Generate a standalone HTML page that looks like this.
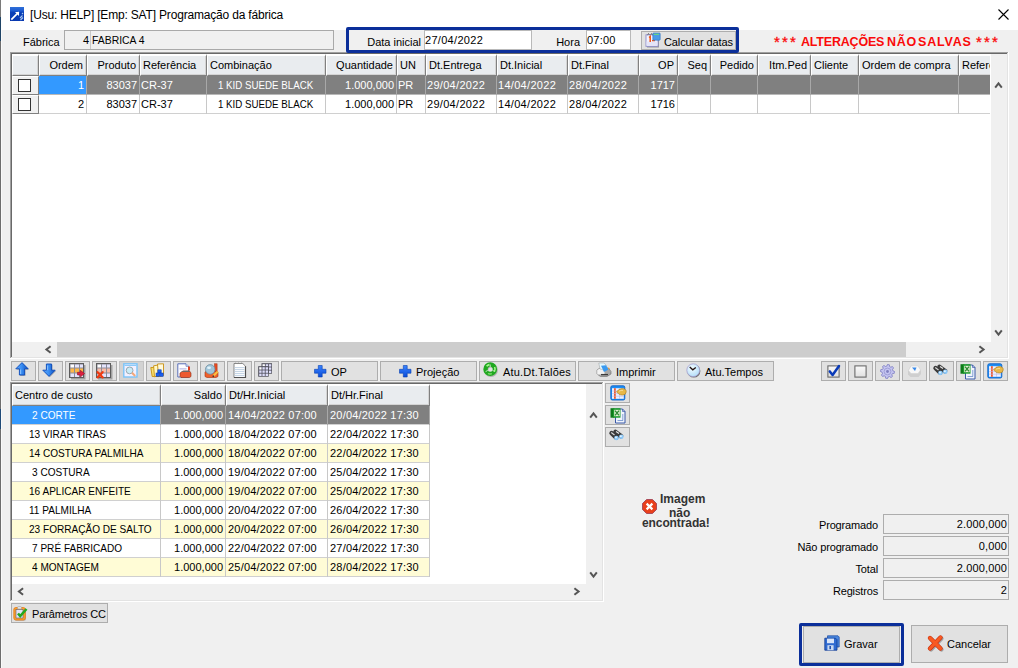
<!DOCTYPE html><html><head><meta charset="utf-8"><style>
*{box-sizing:border-box}
body{margin:0;width:1018px;height:668px;overflow:hidden;background:#f0f0f0;position:relative;font-family:"Liberation Sans",sans-serif;font-size:11px;color:#000}
.t{position:absolute;white-space:pre;line-height:13px}
.uc{letter-spacing:-0.6px}
.btn{position:absolute;background:#e1e1e1;border:1px solid #adadad}
svg{position:absolute;overflow:visible}
</style></head><body>
<div style="position:absolute;left:0px;top:0px;width:1px;height:17px;background:#7a7a7a"></div>
<div style="position:absolute;left:0px;top:17px;width:1px;height:24px;background:#1f4466"></div>
<div style="position:absolute;left:0px;top:41px;width:1px;height:368px;background:#6e6e6e"></div>
<div style="position:absolute;left:0px;top:409px;width:1px;height:20px;background:#1f4a78"></div>
<div style="position:absolute;left:0px;top:429px;width:1px;height:239px;background:#6e6e6e"></div>
<div style="position:absolute;left:1px;top:30px;width:1px;height:638px;background:#fafafa"></div>
<div style="position:absolute;left:1px;top:0px;width:1017px;height:30px;background:#fff"></div>
<svg style="left:10px;top:7px" width="14" height="14" viewBox="0 0 14 14"><defs><linearGradient id="tg" x1="0" y1="0" x2="0" y2="1"><stop offset="0" stop-color="#3070d8"/><stop offset="0.3" stop-color="#1a58d0"/><stop offset="0.35" stop-color="#0a40b8"/><stop offset="1" stop-color="#0838b0"/></linearGradient></defs><rect width="14" height="14" fill="url(#tg)"/><path d="M1.3 12.7 L8.8 5.2" stroke="#fff" stroke-width="1.7"/><path d="M5 5 H9 V9 Z" fill="#fff"/><path d="M10 11 L12.5 8.5 M10.5 13 L13 10.5 M12 7 L13 6" stroke="#a8c8f0" stroke-width="1.1"/></svg>
<div class="t" style="left:30px;top:8px;font-size:12px;letter-spacing:-0.18px;line-height:14px">[Usu: HELP] [Emp: SAT] Programação da fábrica</div>
<svg style="left:998px;top:9px" width="11" height="11" viewBox="0 0 11 11"><path d="M0.5 0.5 L10.5 10.5 M10.5 0.5 L0.5 10.5" stroke="#000" stroke-width="1.1"/></svg>
<div class="t" style="left:23px;top:36px;">Fábrica</div>
<div style="position:absolute;left:64px;top:30px;width:270px;height:20px;border:1px solid #a9a9a9;background:#f0f0f0"></div>
<div style="position:absolute;left:90px;top:31px;width:1px;height:18px;background:#c8c8c8"></div>
<div class="t" style="left:64px;top:34px;width:25px;text-align:right;">4</div>
<div class="t" style="left:92px;top:34px;transform:scaleX(0.945);transform-origin:0 0">FABRICA 4</div>
<div style="position:absolute;left:346px;top:27px;width:393px;height:26px;border:3px solid #0b2f9a;border-radius:2px;z-index:5"></div>
<div class="t" style="left:353px;top:36px;width:68px;text-align:right;">Data inicial</div>
<div style="position:absolute;left:424px;top:30px;width:108px;height:20px;background:#fff;border:1px solid #b9b9b9"></div>
<div class="t" style="left:425px;top:34px;letter-spacing:0.3px">27/04/2022</div>
<div class="t" style="left:540px;top:36px;width:40px;text-align:right;">Hora</div>
<div style="position:absolute;left:586px;top:30px;width:45px;height:20px;background:#fff;border:1px solid #b9b9b9"></div>
<div class="t" style="left:587px;top:34px;letter-spacing:0.2px">07:00</div>
<div style="position:absolute;left:641px;top:31px;width:95px;height:19px;background:#e1e1e1;border:1px solid #adadad"></div>
<div class="t" style="left:664px;top:36px;letter-spacing:-0.1px">Calcular datas</div>
<div class="t" style="left:774px;top:34px;font-size:12.5px;font-weight:bold;color:#fa0a0a;line-height:15px;font-size:15px;font-weight:normal;letter-spacing:2.2px;-webkit-text-stroke:0.3px #fa0a0a">***</div>
<div class="t" style="left:801px;top:35px;font-size:12.5px;font-weight:bold;color:#fa0a0a;line-height:15px;letter-spacing:-0.2px">ALTERAÇÕES</div>
<div class="t" style="left:887px;top:35px;font-size:12.5px;font-weight:bold;color:#fa0a0a;line-height:15px;letter-spacing:0.7px">NÃO</div>
<div class="t" style="left:918px;top:35px;font-size:12.5px;font-weight:bold;color:#fa0a0a;line-height:15px;letter-spacing:0.8px">SALVAS</div>
<div class="t" style="left:976px;top:34px;font-size:12.5px;font-weight:bold;color:#fa0a0a;line-height:15px;font-size:15px;font-weight:normal;letter-spacing:2.2px;-webkit-text-stroke:0.3px #fa0a0a">***</div>
<div style="position:absolute;left:10px;top:52px;width:999px;height:1px;background:#a0a0a0"></div>
<div style="position:absolute;left:10px;top:52px;width:1px;height:307px;background:#a0a0a0"></div>
<div style="position:absolute;left:11px;top:53px;width:997px;height:1px;background:#696969"></div>
<div style="position:absolute;left:11px;top:53px;width:1px;height:305px;background:#696969"></div>
<div style="position:absolute;left:10px;top:358px;width:999px;height:1px;background:#fff"></div>
<div style="position:absolute;left:1008px;top:52px;width:1px;height:307px;background:#fff"></div>
<div style="position:absolute;left:11px;top:357px;width:997px;height:1px;background:#e3e3e3"></div>
<div style="position:absolute;left:1007px;top:53px;width:1px;height:305px;background:#e3e3e3"></div>
<div style="position:absolute;left:12px;top:54px;width:979px;height:288px;background:#fff"></div>
<div style="position:absolute;left:991px;top:54px;width:16px;height:303px;background:#f0f0f0"></div>
<div style="position:absolute;left:12px;top:342px;width:979px;height:15px;background:#f0f0f0"></div>
<div style="position:absolute;left:57px;top:342px;width:849px;height:15px;background:#cdcdcd"></div>
<svg style="left:0;top:0" width="1" height="1"><path d="M995.2 87.6 L998.5 83.4 L1001.8 87.6" stroke="#555" stroke-width="2" fill="none"/></svg>
<svg style="left:0;top:0" width="1" height="1"><path d="M995.2 330.4 L998.5 334.6 L1001.8 330.4" stroke="#555" stroke-width="2" fill="none"/></svg>
<svg style="left:0;top:0" width="1" height="1"><path d="M50.6 346.2 L46.4 349.5 L50.6 352.8" stroke="#555" stroke-width="2" fill="none"/></svg>
<svg style="left:0;top:0" width="1" height="1"><path d="M979.4 346.2 L983.6 349.5 L979.4 352.8" stroke="#555" stroke-width="2" fill="none"/></svg>
<div style="position:absolute;left:12px;top:54px;width:978px;height:288px;overflow:hidden">
<div style="position:absolute;left:0px;top:0px;width:27px;height:22px;background:#e9ecef;border-top:2px solid #fff;border-left:1px solid #fff;border-right:1px solid #808080;border-bottom:1px solid #808080;box-shadow:inset -1px -1px 0 #d4d4d4"></div>
<div style="position:absolute;left:27px;top:0px;width:48px;height:22px;background:#e9ecef;border-top:2px solid #fff;border-left:1px solid #fff;border-right:1px solid #808080;border-bottom:1px solid #808080;box-shadow:inset -1px -1px 0 #d4d4d4"></div>
<div class="t" style="left:27px;top:5px;width:44px;text-align:right;">Ordem</div>
<div style="position:absolute;left:75px;top:0px;width:53px;height:22px;background:#e9ecef;border-top:2px solid #fff;border-left:1px solid #fff;border-right:1px solid #808080;border-bottom:1px solid #808080;box-shadow:inset -1px -1px 0 #d4d4d4"></div>
<div class="t" style="left:75px;top:5px;width:49px;text-align:right;">Produto</div>
<div style="position:absolute;left:128px;top:0px;width:67px;height:22px;background:#e9ecef;border-top:2px solid #fff;border-left:1px solid #fff;border-right:1px solid #808080;border-bottom:1px solid #808080;box-shadow:inset -1px -1px 0 #d4d4d4"></div>
<div class="t" style="left:131px;top:5px;">Referência</div>
<div style="position:absolute;left:195px;top:0px;width:119px;height:22px;background:#e9ecef;border-top:2px solid #fff;border-left:1px solid #fff;border-right:1px solid #808080;border-bottom:1px solid #808080;box-shadow:inset -1px -1px 0 #d4d4d4"></div>
<div class="t" style="left:198px;top:5px;">Combinação</div>
<div style="position:absolute;left:314px;top:0px;width:71px;height:22px;background:#e9ecef;border-top:2px solid #fff;border-left:1px solid #fff;border-right:1px solid #808080;border-bottom:1px solid #808080;box-shadow:inset -1px -1px 0 #d4d4d4"></div>
<div class="t" style="left:314px;top:5px;width:67px;text-align:right;">Quantidade</div>
<div style="position:absolute;left:385px;top:0px;width:29px;height:22px;background:#e9ecef;border-top:2px solid #fff;border-left:1px solid #fff;border-right:1px solid #808080;border-bottom:1px solid #808080;box-shadow:inset -1px -1px 0 #d4d4d4"></div>
<div class="t" style="left:388px;top:5px;">UN</div>
<div style="position:absolute;left:414px;top:0px;width:71px;height:22px;background:#e9ecef;border-top:2px solid #fff;border-left:1px solid #fff;border-right:1px solid #808080;border-bottom:1px solid #808080;box-shadow:inset -1px -1px 0 #d4d4d4"></div>
<div class="t" style="left:417px;top:5px;">Dt.Entrega</div>
<div style="position:absolute;left:485px;top:0px;width:71px;height:22px;background:#e9ecef;border-top:2px solid #fff;border-left:1px solid #fff;border-right:1px solid #808080;border-bottom:1px solid #808080;box-shadow:inset -1px -1px 0 #d4d4d4"></div>
<div class="t" style="left:488px;top:5px;">Dt.Inicial</div>
<div style="position:absolute;left:556px;top:0px;width:71px;height:22px;background:#e9ecef;border-top:2px solid #fff;border-left:1px solid #fff;border-right:1px solid #808080;border-bottom:1px solid #808080;box-shadow:inset -1px -1px 0 #d4d4d4"></div>
<div class="t" style="left:559px;top:5px;">Dt.Final</div>
<div style="position:absolute;left:627px;top:0px;width:39px;height:22px;background:#e9ecef;border-top:2px solid #fff;border-left:1px solid #fff;border-right:1px solid #808080;border-bottom:1px solid #808080;box-shadow:inset -1px -1px 0 #d4d4d4"></div>
<div class="t" style="left:627px;top:5px;width:35px;text-align:right;">OP</div>
<div style="position:absolute;left:666px;top:0px;width:33px;height:22px;background:#e9ecef;border-top:2px solid #fff;border-left:1px solid #fff;border-right:1px solid #808080;border-bottom:1px solid #808080;box-shadow:inset -1px -1px 0 #d4d4d4"></div>
<div class="t" style="left:666px;top:5px;width:29px;text-align:right;">Seq</div>
<div style="position:absolute;left:699px;top:0px;width:47px;height:22px;background:#e9ecef;border-top:2px solid #fff;border-left:1px solid #fff;border-right:1px solid #808080;border-bottom:1px solid #808080;box-shadow:inset -1px -1px 0 #d4d4d4"></div>
<div class="t" style="left:699px;top:5px;width:43px;text-align:right;">Pedido</div>
<div style="position:absolute;left:746px;top:0px;width:53px;height:22px;background:#e9ecef;border-top:2px solid #fff;border-left:1px solid #fff;border-right:1px solid #808080;border-bottom:1px solid #808080;box-shadow:inset -1px -1px 0 #d4d4d4"></div>
<div class="t" style="left:746px;top:5px;width:49px;text-align:right;">Itm.Ped</div>
<div style="position:absolute;left:799px;top:0px;width:48px;height:22px;background:#e9ecef;border-top:2px solid #fff;border-left:1px solid #fff;border-right:1px solid #808080;border-bottom:1px solid #808080;box-shadow:inset -1px -1px 0 #d4d4d4"></div>
<div class="t" style="left:802px;top:5px;">Cliente</div>
<div style="position:absolute;left:847px;top:0px;width:100px;height:22px;background:#e9ecef;border-top:2px solid #fff;border-left:1px solid #fff;border-right:1px solid #808080;border-bottom:1px solid #808080;box-shadow:inset -1px -1px 0 #d4d4d4"></div>
<div class="t" style="left:850px;top:5px;">Ordem de compra</div>
<div style="position:absolute;left:947px;top:0px;width:42px;height:22px;background:#e9ecef;border-top:2px solid #fff;border-left:1px solid #fff;border-right:1px solid #808080;border-bottom:1px solid #808080;box-shadow:inset -1px -1px 0 #d4d4d4"></div>
<div class="t" style="left:950px;top:5px;">Referência</div>
<div style="position:absolute;left:0px;top:22px;width:27px;height:19px;background:#f0f0f0;border-top:1px solid #fff;border-left:1px solid #fff;border-right:1px solid #808080;border-bottom:1px solid #808080"></div>
<div style="position:absolute;left:6px;top:25px;width:13px;height:13px;background:#fff;border:1.5px solid #333"></div>
<div style="position:absolute;left:75px;top:22px;width:913px;height:18px;background:#808080"></div>
<div style="position:absolute;left:27px;top:22px;width:47px;height:18px;background:#3399ff"></div>
<div style="position:absolute;left:27px;top:40px;width:961px;height:1px;background:#b8b8b8"></div>
<div style="position:absolute;left:74px;top:22px;width:1px;height:19px;background:#a8a8a8"></div>
<div class="t" style="left:27px;top:25px;width:45px;text-align:right;color:#fff;">1</div>
<div style="position:absolute;left:127px;top:22px;width:1px;height:19px;background:#a8a8a8"></div>
<div class="t" style="left:75px;top:25px;width:50px;text-align:right;color:#fff;">83037</div>
<div style="position:absolute;left:194px;top:22px;width:1px;height:19px;background:#a8a8a8"></div>
<div class="t" style="left:129px;top:25px;color:#fff;">CR-37</div>
<div style="position:absolute;left:313px;top:22px;width:1px;height:19px;background:#a8a8a8"></div>
<div class="t" style="left:206px;top:25px;color:#fff;transform:scaleX(0.885);transform-origin:0 0;">1 KID SUEDE BLACK</div>
<div style="position:absolute;left:384px;top:22px;width:1px;height:19px;background:#a8a8a8"></div>
<div class="t" style="left:314px;top:25px;width:68px;text-align:right;color:#fff;">1.000,000</div>
<div style="position:absolute;left:413px;top:22px;width:1px;height:19px;background:#a8a8a8"></div>
<div class="t" style="left:386px;top:25px;color:#fff;">PR</div>
<div style="position:absolute;left:484px;top:22px;width:1px;height:19px;background:#a8a8a8"></div>
<div class="t" style="left:415px;top:25px;color:#fff;letter-spacing:0.3px;">29/04/2022</div>
<div style="position:absolute;left:555px;top:22px;width:1px;height:19px;background:#a8a8a8"></div>
<div class="t" style="left:486px;top:25px;color:#fff;letter-spacing:0.3px;">14/04/2022</div>
<div style="position:absolute;left:626px;top:22px;width:1px;height:19px;background:#a8a8a8"></div>
<div class="t" style="left:557px;top:25px;color:#fff;letter-spacing:0.3px;">28/04/2022</div>
<div style="position:absolute;left:665px;top:22px;width:1px;height:19px;background:#a8a8a8"></div>
<div class="t" style="left:627px;top:25px;width:36px;text-align:right;color:#fff;">1717</div>
<div style="position:absolute;left:698px;top:22px;width:1px;height:19px;background:#a8a8a8"></div>
<div style="position:absolute;left:745px;top:22px;width:1px;height:19px;background:#a8a8a8"></div>
<div style="position:absolute;left:798px;top:22px;width:1px;height:19px;background:#a8a8a8"></div>
<div style="position:absolute;left:846px;top:22px;width:1px;height:19px;background:#a8a8a8"></div>
<div style="position:absolute;left:946px;top:22px;width:1px;height:19px;background:#a8a8a8"></div>
<div style="position:absolute;left:988px;top:22px;width:1px;height:19px;background:#a8a8a8"></div>
<div style="position:absolute;left:0px;top:41px;width:27px;height:19px;background:#f0f0f0;border-top:1px solid #fff;border-left:1px solid #fff;border-right:1px solid #808080;border-bottom:1px solid #808080"></div>
<div style="position:absolute;left:6px;top:44px;width:13px;height:13px;background:#fff;border:1.5px solid #333"></div>
<div style="position:absolute;left:27px;top:59px;width:961px;height:1px;background:#d0d0d0"></div>
<div style="position:absolute;left:74px;top:41px;width:1px;height:19px;background:#c8c8c8"></div>
<div class="t" style="left:27px;top:44px;width:45px;text-align:right;">2</div>
<div style="position:absolute;left:127px;top:41px;width:1px;height:19px;background:#c8c8c8"></div>
<div class="t" style="left:75px;top:44px;width:50px;text-align:right;">83037</div>
<div style="position:absolute;left:194px;top:41px;width:1px;height:19px;background:#c8c8c8"></div>
<div class="t" style="left:129px;top:44px;">CR-37</div>
<div style="position:absolute;left:313px;top:41px;width:1px;height:19px;background:#c8c8c8"></div>
<div class="t" style="left:206px;top:44px;transform:scaleX(0.885);transform-origin:0 0;">1 KID SUEDE BLACK</div>
<div style="position:absolute;left:384px;top:41px;width:1px;height:19px;background:#c8c8c8"></div>
<div class="t" style="left:314px;top:44px;width:68px;text-align:right;">1.000,000</div>
<div style="position:absolute;left:413px;top:41px;width:1px;height:19px;background:#c8c8c8"></div>
<div class="t" style="left:386px;top:44px;">PR</div>
<div style="position:absolute;left:484px;top:41px;width:1px;height:19px;background:#c8c8c8"></div>
<div class="t" style="left:415px;top:44px;letter-spacing:0.3px;">29/04/2022</div>
<div style="position:absolute;left:555px;top:41px;width:1px;height:19px;background:#c8c8c8"></div>
<div class="t" style="left:486px;top:44px;letter-spacing:0.3px;">14/04/2022</div>
<div style="position:absolute;left:626px;top:41px;width:1px;height:19px;background:#c8c8c8"></div>
<div class="t" style="left:557px;top:44px;letter-spacing:0.3px;">28/04/2022</div>
<div style="position:absolute;left:665px;top:41px;width:1px;height:19px;background:#c8c8c8"></div>
<div class="t" style="left:627px;top:44px;width:36px;text-align:right;">1716</div>
<div style="position:absolute;left:698px;top:41px;width:1px;height:19px;background:#c8c8c8"></div>
<div style="position:absolute;left:745px;top:41px;width:1px;height:19px;background:#c8c8c8"></div>
<div style="position:absolute;left:798px;top:41px;width:1px;height:19px;background:#c8c8c8"></div>
<div style="position:absolute;left:846px;top:41px;width:1px;height:19px;background:#c8c8c8"></div>
<div style="position:absolute;left:946px;top:41px;width:1px;height:19px;background:#c8c8c8"></div>
<div style="position:absolute;left:988px;top:41px;width:1px;height:19px;background:#c8c8c8"></div>
</div>
<div style="position:absolute;left:10px;top:382px;width:594px;height:1px;background:#a0a0a0"></div>
<div style="position:absolute;left:10px;top:382px;width:1px;height:220px;background:#a0a0a0"></div>
<div style="position:absolute;left:11px;top:383px;width:592px;height:1px;background:#696969"></div>
<div style="position:absolute;left:11px;top:383px;width:1px;height:218px;background:#696969"></div>
<div style="position:absolute;left:10px;top:601px;width:594px;height:1px;background:#fff"></div>
<div style="position:absolute;left:603px;top:382px;width:1px;height:220px;background:#fff"></div>
<div style="position:absolute;left:11px;top:600px;width:592px;height:1px;background:#e3e3e3"></div>
<div style="position:absolute;left:602px;top:383px;width:1px;height:218px;background:#e3e3e3"></div>
<div style="position:absolute;left:12px;top:384px;width:574px;height:200px;background:#fff"></div>
<div style="position:absolute;left:586px;top:384px;width:16px;height:216px;background:#f0f0f0"></div>
<div style="position:absolute;left:12px;top:584px;width:574px;height:16px;background:#f0f0f0"></div>
<svg style="left:0;top:0" width="1" height="1"><path d="M590.2 417.6 L593.5 413.4 L596.8 417.6" stroke="#555" stroke-width="2" fill="none"/></svg>
<svg style="left:0;top:0" width="1" height="1"><path d="M590.2 572.4 L593.5 576.6 L596.8 572.4" stroke="#555" stroke-width="2" fill="none"/></svg>
<svg style="left:0;top:0" width="1" height="1"><path d="M23.1 588.2 L18.9 591.5 L23.1 594.8" stroke="#555" stroke-width="2" fill="none"/></svg>
<svg style="left:0;top:0" width="1" height="1"><path d="M574.4 588.2 L578.6 591.5 L574.4 594.8" stroke="#555" stroke-width="2" fill="none"/></svg>
<div style="position:absolute;left:12px;top:384px;width:149px;height:22px;background:#e9ecef;border-top:2px solid #fff;border-left:1px solid #fff;border-right:1px solid #808080;border-bottom:1px solid #808080;box-shadow:inset -1px -1px 0 #d4d4d4"></div>
<div class="t" style="left:15px;top:389px;">Centro de custo</div>
<div style="position:absolute;left:161px;top:384px;width:65px;height:22px;background:#e9ecef;border-top:2px solid #fff;border-left:1px solid #fff;border-right:1px solid #808080;border-bottom:1px solid #808080;box-shadow:inset -1px -1px 0 #d4d4d4"></div>
<div class="t" style="left:161px;top:389px;width:61px;text-align:right;">Saldo</div>
<div style="position:absolute;left:226px;top:384px;width:102px;height:22px;background:#e9ecef;border-top:2px solid #fff;border-left:1px solid #fff;border-right:1px solid #808080;border-bottom:1px solid #808080;box-shadow:inset -1px -1px 0 #d4d4d4"></div>
<div class="t" style="left:229px;top:389px;">Dt/Hr.Inicial</div>
<div style="position:absolute;left:328px;top:384px;width:102px;height:22px;background:#e9ecef;border-top:2px solid #fff;border-left:1px solid #fff;border-right:1px solid #808080;border-bottom:1px solid #808080;box-shadow:inset -1px -1px 0 #d4d4d4"></div>
<div class="t" style="left:331px;top:389px;">Dt/Hr.Final</div>
<div style="position:absolute;left:12px;top:406px;width:148px;height:18px;background:#3399ff"></div>
<div style="position:absolute;left:161px;top:406px;width:269px;height:18px;background:#808080"></div>
<div style="position:absolute;left:12px;top:424px;width:418px;height:1px;background:#d0d0d0"></div>
<div style="position:absolute;left:160px;top:406px;width:1px;height:19px;background:#a8a8a8"></div>
<div style="position:absolute;left:225px;top:406px;width:1px;height:19px;background:#a8a8a8"></div>
<div style="position:absolute;left:327px;top:406px;width:1px;height:19px;background:#a8a8a8"></div>
<div style="position:absolute;left:429px;top:406px;width:1px;height:19px;background:#a8a8a8"></div>
<div class="t" style="left:32px;top:409px;color:#fff;transform:scaleX(0.915);transform-origin:0 0">2 CORTE</div>
<div class="t" style="left:161px;top:409px;width:62px;text-align:right;color:#fff;">1.000,000</div>
<div class="t" style="left:228px;top:409px;color:#fff;letter-spacing:0.2px">14/04/2022 07:00</div>
<div class="t" style="left:330px;top:409px;color:#fff;letter-spacing:0.2px">20/04/2022 17:30</div>
<div style="position:absolute;left:12px;top:425px;width:418px;height:18px;background:#fff"></div>
<div style="position:absolute;left:12px;top:443px;width:418px;height:1px;background:#d0d0d0"></div>
<div style="position:absolute;left:160px;top:425px;width:1px;height:19px;background:#c8c8c8"></div>
<div style="position:absolute;left:225px;top:425px;width:1px;height:19px;background:#c8c8c8"></div>
<div style="position:absolute;left:327px;top:425px;width:1px;height:19px;background:#c8c8c8"></div>
<div style="position:absolute;left:429px;top:425px;width:1px;height:19px;background:#c8c8c8"></div>
<div class="t" style="left:29px;top:428px;transform:scaleX(0.915);transform-origin:0 0">13 VIRAR TIRAS</div>
<div class="t" style="left:161px;top:428px;width:62px;text-align:right;">1.000,000</div>
<div class="t" style="left:228px;top:428px;letter-spacing:0.2px">18/04/2022 07:00</div>
<div class="t" style="left:330px;top:428px;letter-spacing:0.2px">22/04/2022 17:30</div>
<div style="position:absolute;left:12px;top:444px;width:418px;height:18px;background:#fffcd6"></div>
<div style="position:absolute;left:12px;top:462px;width:418px;height:1px;background:#d0d0d0"></div>
<div style="position:absolute;left:160px;top:444px;width:1px;height:19px;background:#c8c8c8"></div>
<div style="position:absolute;left:225px;top:444px;width:1px;height:19px;background:#c8c8c8"></div>
<div style="position:absolute;left:327px;top:444px;width:1px;height:19px;background:#c8c8c8"></div>
<div style="position:absolute;left:429px;top:444px;width:1px;height:19px;background:#c8c8c8"></div>
<div class="t" style="left:29px;top:447px;transform:scaleX(0.915);transform-origin:0 0">14 COSTURA PALMILHA</div>
<div class="t" style="left:161px;top:447px;width:62px;text-align:right;">1.000,000</div>
<div class="t" style="left:228px;top:447px;letter-spacing:0.2px">18/04/2022 07:00</div>
<div class="t" style="left:330px;top:447px;letter-spacing:0.2px">22/04/2022 17:30</div>
<div style="position:absolute;left:12px;top:463px;width:418px;height:18px;background:#fff"></div>
<div style="position:absolute;left:12px;top:481px;width:418px;height:1px;background:#d0d0d0"></div>
<div style="position:absolute;left:160px;top:463px;width:1px;height:19px;background:#c8c8c8"></div>
<div style="position:absolute;left:225px;top:463px;width:1px;height:19px;background:#c8c8c8"></div>
<div style="position:absolute;left:327px;top:463px;width:1px;height:19px;background:#c8c8c8"></div>
<div style="position:absolute;left:429px;top:463px;width:1px;height:19px;background:#c8c8c8"></div>
<div class="t" style="left:32px;top:466px;transform:scaleX(0.915);transform-origin:0 0">3 COSTURA</div>
<div class="t" style="left:161px;top:466px;width:62px;text-align:right;">1.000,000</div>
<div class="t" style="left:228px;top:466px;letter-spacing:0.2px">19/04/2022 07:00</div>
<div class="t" style="left:330px;top:466px;letter-spacing:0.2px">25/04/2022 17:30</div>
<div style="position:absolute;left:12px;top:482px;width:418px;height:18px;background:#fffcd6"></div>
<div style="position:absolute;left:12px;top:500px;width:418px;height:1px;background:#d0d0d0"></div>
<div style="position:absolute;left:160px;top:482px;width:1px;height:19px;background:#c8c8c8"></div>
<div style="position:absolute;left:225px;top:482px;width:1px;height:19px;background:#c8c8c8"></div>
<div style="position:absolute;left:327px;top:482px;width:1px;height:19px;background:#c8c8c8"></div>
<div style="position:absolute;left:429px;top:482px;width:1px;height:19px;background:#c8c8c8"></div>
<div class="t" style="left:29px;top:485px;transform:scaleX(0.915);transform-origin:0 0">16 APLICAR ENFEITE</div>
<div class="t" style="left:161px;top:485px;width:62px;text-align:right;">1.000,000</div>
<div class="t" style="left:228px;top:485px;letter-spacing:0.2px">19/04/2022 07:00</div>
<div class="t" style="left:330px;top:485px;letter-spacing:0.2px">25/04/2022 17:30</div>
<div style="position:absolute;left:12px;top:501px;width:418px;height:18px;background:#fff"></div>
<div style="position:absolute;left:12px;top:519px;width:418px;height:1px;background:#d0d0d0"></div>
<div style="position:absolute;left:160px;top:501px;width:1px;height:19px;background:#c8c8c8"></div>
<div style="position:absolute;left:225px;top:501px;width:1px;height:19px;background:#c8c8c8"></div>
<div style="position:absolute;left:327px;top:501px;width:1px;height:19px;background:#c8c8c8"></div>
<div style="position:absolute;left:429px;top:501px;width:1px;height:19px;background:#c8c8c8"></div>
<div class="t" style="left:29px;top:504px;transform:scaleX(0.915);transform-origin:0 0">11 PALMILHA</div>
<div class="t" style="left:161px;top:504px;width:62px;text-align:right;">1.000,000</div>
<div class="t" style="left:228px;top:504px;letter-spacing:0.2px">20/04/2022 07:00</div>
<div class="t" style="left:330px;top:504px;letter-spacing:0.2px">26/04/2022 17:30</div>
<div style="position:absolute;left:12px;top:520px;width:418px;height:18px;background:#fffcd6"></div>
<div style="position:absolute;left:12px;top:538px;width:418px;height:1px;background:#d0d0d0"></div>
<div style="position:absolute;left:160px;top:520px;width:1px;height:19px;background:#c8c8c8"></div>
<div style="position:absolute;left:225px;top:520px;width:1px;height:19px;background:#c8c8c8"></div>
<div style="position:absolute;left:327px;top:520px;width:1px;height:19px;background:#c8c8c8"></div>
<div style="position:absolute;left:429px;top:520px;width:1px;height:19px;background:#c8c8c8"></div>
<div class="t" style="left:29px;top:523px;transform:scaleX(0.915);transform-origin:0 0">23 FORRAÇÃO DE SALTO</div>
<div class="t" style="left:161px;top:523px;width:62px;text-align:right;">1.000,000</div>
<div class="t" style="left:228px;top:523px;letter-spacing:0.2px">20/04/2022 07:00</div>
<div class="t" style="left:330px;top:523px;letter-spacing:0.2px">26/04/2022 17:30</div>
<div style="position:absolute;left:12px;top:539px;width:418px;height:18px;background:#fff"></div>
<div style="position:absolute;left:12px;top:557px;width:418px;height:1px;background:#d0d0d0"></div>
<div style="position:absolute;left:160px;top:539px;width:1px;height:19px;background:#c8c8c8"></div>
<div style="position:absolute;left:225px;top:539px;width:1px;height:19px;background:#c8c8c8"></div>
<div style="position:absolute;left:327px;top:539px;width:1px;height:19px;background:#c8c8c8"></div>
<div style="position:absolute;left:429px;top:539px;width:1px;height:19px;background:#c8c8c8"></div>
<div class="t" style="left:32px;top:542px;transform:scaleX(0.915);transform-origin:0 0">7 PRÉ FABRICADO</div>
<div class="t" style="left:161px;top:542px;width:62px;text-align:right;">1.000,000</div>
<div class="t" style="left:228px;top:542px;letter-spacing:0.2px">22/04/2022 07:00</div>
<div class="t" style="left:330px;top:542px;letter-spacing:0.2px">27/04/2022 17:30</div>
<div style="position:absolute;left:12px;top:558px;width:418px;height:18px;background:#fffcd6"></div>
<div style="position:absolute;left:12px;top:576px;width:418px;height:1px;background:#d0d0d0"></div>
<div style="position:absolute;left:160px;top:558px;width:1px;height:19px;background:#c8c8c8"></div>
<div style="position:absolute;left:225px;top:558px;width:1px;height:19px;background:#c8c8c8"></div>
<div style="position:absolute;left:327px;top:558px;width:1px;height:19px;background:#c8c8c8"></div>
<div style="position:absolute;left:429px;top:558px;width:1px;height:19px;background:#c8c8c8"></div>
<div class="t" style="left:32px;top:561px;transform:scaleX(0.915);transform-origin:0 0">4 MONTAGEM</div>
<div class="t" style="left:161px;top:561px;width:62px;text-align:right;">1.000,000</div>
<div class="t" style="left:228px;top:561px;letter-spacing:0.2px">25/04/2022 07:00</div>
<div class="t" style="left:330px;top:561px;letter-spacing:0.2px">28/04/2022 17:30</div>
<div style="position:absolute;left:11px;top:361px;width:25px;height:20px;border:1px solid #adadad;background:#e1e1e1"></div>
<div style="position:absolute;left:38px;top:361px;width:25px;height:20px;border:1px solid #adadad;background:#e1e1e1"></div>
<div style="position:absolute;left:65px;top:361px;width:25px;height:20px;border:1px solid #adadad;background:#e1e1e1"></div>
<div style="position:absolute;left:92px;top:361px;width:25px;height:20px;border:1px solid #adadad;background:#e1e1e1"></div>
<div style="position:absolute;left:119px;top:361px;width:25px;height:20px;border:1px solid #adadad;background:#d3d3d3;border-color:#c2c2c2"></div>
<div style="position:absolute;left:146px;top:361px;width:25px;height:20px;border:1px solid #adadad;background:#e1e1e1"></div>
<div style="position:absolute;left:173px;top:361px;width:25px;height:20px;border:1px solid #adadad;background:#e1e1e1"></div>
<div style="position:absolute;left:200px;top:361px;width:25px;height:20px;border:1px solid #adadad;background:#e1e1e1"></div>
<div style="position:absolute;left:227px;top:361px;width:25px;height:20px;border:1px solid #adadad;background:#e1e1e1"></div>
<div style="position:absolute;left:254px;top:361px;width:25px;height:20px;border:1px solid #adadad;background:#e1e1e1"></div>
<div style="position:absolute;left:281px;top:361px;width:97px;height:20px;background:#e1e1e1;border:1px solid #adadad"></div>
<div style="position:absolute;left:380px;top:361px;width:97px;height:20px;background:#e1e1e1;border:1px solid #adadad"></div>
<div style="position:absolute;left:479px;top:361px;width:97px;height:20px;background:#e1e1e1;border:1px solid #adadad"></div>
<div style="position:absolute;left:578px;top:361px;width:97px;height:20px;background:#e1e1e1;border:1px solid #adadad"></div>
<div style="position:absolute;left:677px;top:361px;width:97px;height:20px;background:#e1e1e1;border:1px solid #adadad"></div>
<div style="position:absolute;left:821px;top:361px;width:25px;height:20px;background:#e1e1e1;border:1px solid #adadad"></div>
<div style="position:absolute;left:848px;top:361px;width:25px;height:20px;background:#e1e1e1;border:1px solid #adadad"></div>
<div style="position:absolute;left:875px;top:361px;width:25px;height:20px;background:#e1e1e1;border:1px solid #adadad"></div>
<div style="position:absolute;left:902px;top:361px;width:25px;height:20px;background:#e1e1e1;border:1px solid #adadad"></div>
<div style="position:absolute;left:929px;top:361px;width:25px;height:20px;background:#e1e1e1;border:1px solid #adadad"></div>
<div style="position:absolute;left:956px;top:361px;width:25px;height:20px;background:#e1e1e1;border:1px solid #adadad"></div>
<div style="position:absolute;left:983px;top:361px;width:25px;height:20px;background:#e1e1e1;border:1px solid #adadad"></div>
<div style="position:absolute;left:605px;top:383px;width:25px;height:20px;background:#e1e1e1;border:1px solid #adadad"></div>
<div style="position:absolute;left:605px;top:405px;width:25px;height:20px;background:#e1e1e1;border:1px solid #adadad"></div>
<div style="position:absolute;left:605px;top:427px;width:25px;height:20px;background:#e1e1e1;border:1px solid #adadad"></div>
<svg style="left:642px;top:499px" width="15" height="15" viewBox="0 0 15 15"><path d="M4.5 0.5 H10.5 L14.5 4.5 V10.5 L10.5 14.5 H4.5 L0.5 10.5 V4.5 Z" fill="#e8401c" stroke="#9a3a50" stroke-width="0.8"/><path d="M4.6 4.6 L10.4 10.4 M10.4 4.6 L4.6 10.4" stroke="#fff" stroke-width="2.2"/></svg>
<div class="t" style="left:660px;top:493px;font-size:12px;font-weight:bold;color:#333">Imagem</div>
<div class="t" style="left:669px;top:507px;font-size:12px;font-weight:bold;color:#333">não</div>
<div class="t" style="left:642px;top:517px;font-size:12px;font-weight:bold;color:#333;letter-spacing:-0.1px">encontrada!</div>
<div style="position:absolute;left:883px;top:514px;width:126px;height:20px;border:1px solid #adadad"></div>
<div class="t" style="left:700px;top:519px;width:178px;text-align:right;letter-spacing:-0.15px">Programado</div>
<div class="t" style="left:886px;top:518px;width:121px;text-align:right;letter-spacing:0.15px">2.000,000</div>
<div style="position:absolute;left:883px;top:536px;width:126px;height:20px;border:1px solid #adadad"></div>
<div class="t" style="left:700px;top:541px;width:178px;text-align:right;letter-spacing:-0.15px">Não programado</div>
<div class="t" style="left:886px;top:540px;width:121px;text-align:right;letter-spacing:0.15px">0,000</div>
<div style="position:absolute;left:883px;top:558px;width:126px;height:20px;border:1px solid #adadad"></div>
<div class="t" style="left:700px;top:563px;width:178px;text-align:right;letter-spacing:-0.15px">Total</div>
<div class="t" style="left:886px;top:562px;width:121px;text-align:right;letter-spacing:0.15px">2.000,000</div>
<div style="position:absolute;left:883px;top:580px;width:126px;height:20px;border:1px solid #adadad"></div>
<div class="t" style="left:700px;top:585px;width:178px;text-align:right;letter-spacing:-0.15px">Registros</div>
<div class="t" style="left:886px;top:584px;width:121px;text-align:right;letter-spacing:0.15px">2</div>
<div style="position:absolute;left:11px;top:603px;width:97px;height:20px;background:#e1e1e1;border:1px solid #adadad"></div>
<div class="t" style="left:32px;top:608px;letter-spacing:-0.15px">Parâmetros CC</div>
<div style="position:absolute;left:799px;top:623px;width:105px;height:43px;border:3px solid #0b2f9a;border-radius:2px"></div>
<div style="position:absolute;left:803px;top:626px;width:97px;height:37px;background:#e1e1e1;border:1px solid #adadad"></div>
<div class="t" style="left:844px;top:638px;">Gravar</div>
<div style="position:absolute;left:911px;top:625px;width:97px;height:38px;background:#e1e1e1;border:1px solid #adadad"></div>
<div class="t" style="left:947px;top:638px;">Cancelar</div>
<svg style="left:15px;top:362px" width="15" height="15" viewBox="0 0 15 15"><defs><linearGradient id="g1" x1="0" y1="0" x2="1" y2="0"><stop offset="0" stop-color="#5aa8ff"/><stop offset="0.45" stop-color="#3c90f4"/><stop offset="1" stop-color="#0c50c0"/></linearGradient></defs><path d="M7 0.6 L13.2 6.8 H9.6 V13 H4.4 V6.8 H0.8 Z" transform="translate(0.9 0.9)" fill="#000" opacity="0.22"/><path d="M7 0.6 L13.2 6.8 H9.6 V13 H4.4 V6.8 H0.8 Z" fill="url(#g1)" stroke="#0a48b8" stroke-width="0.9" stroke-linejoin="round"/><path d="M5.6 7.5 V12" stroke="#a8d4ff" stroke-width="1" opacity="0.7"/></svg>
<svg style="left:42px;top:363px" width="15" height="15" viewBox="0 0 15 15"><defs><linearGradient id="g2" x1="0" y1="0" x2="1" y2="0"><stop offset="0" stop-color="#5aa8ff"/><stop offset="0.45" stop-color="#3c90f4"/><stop offset="1" stop-color="#0c50c0"/></linearGradient></defs><path d="M4.4 1 H9.6 V7.2 H13.2 L7 13.4 L0.8 7.2 H4.4 Z" transform="translate(0.9 0.9)" fill="#000" opacity="0.22"/><path d="M4.4 1 H9.6 V7.2 H13.2 L7 13.4 L0.8 7.2 H4.4 Z" fill="url(#g2)" stroke="#0a48b8" stroke-width="0.9" stroke-linejoin="round"/><path d="M5.6 2.5 V7" stroke="#a8d4ff" stroke-width="1" opacity="0.7"/></svg>
<svg style="left:69px;top:363px" width="17" height="17" viewBox="0 0 17 17"><rect x="2" y="2" width="14.5" height="14.5" fill="#555" opacity="0.45"/><rect x="0.5" y="0.5" width="14" height="14" fill="#8c8c98" stroke="#5c5c5c" stroke-width="1"/><rect x="1.5" y="1.5" width="3.5" height="3" fill="#ffffff"/><rect x="6" y="1.5" width="4" height="3" fill="#e4e4fc"/><rect x="11" y="1.5" width="3" height="3" fill="#e4e4fc"/><rect x="1.5" y="5.5" width="3.5" height="4" fill="#ffb848"/><rect x="6" y="5.5" width="4" height="4" fill="#ffb848"/><rect x="11" y="5.5" width="3" height="4" fill="#ffb848"/><rect x="1.5" y="10.5" width="3.5" height="3.5" fill="#e4e4fc"/><rect x="6" y="10.5" width="4" height="3.5" fill="#e4e4fc"/><rect x="11" y="10.5" width="3" height="3.5" fill="#e4e4fc"/><path d="M8.5 9.3 H11.3 V7.3 L15.6 10.6 L11.3 14 V12 H8.5 Z" fill="#e02040" stroke="#901028" stroke-width="0.6" stroke-linejoin="round"/></svg>
<svg style="left:96px;top:363px" width="17" height="17" viewBox="0 0 17 17"><rect x="2" y="2" width="14.5" height="14.5" fill="#555" opacity="0.45"/><rect x="0.5" y="0.5" width="14" height="14" fill="#8c8c98" stroke="#5c5c5c" stroke-width="1"/><rect x="1.5" y="1.5" width="3.5" height="3" fill="#ffffff"/><rect x="6" y="1.5" width="4" height="3" fill="#e4e4fc"/><rect x="11" y="1.5" width="3" height="3" fill="#e4e4fc"/><rect x="1.5" y="5.5" width="3.5" height="4" fill="#f6bca8"/><rect x="6" y="5.5" width="4" height="4" fill="#f6bca8"/><rect x="11" y="5.5" width="3" height="4" fill="#f6bca8"/><rect x="1.5" y="10.5" width="3.5" height="3.5" fill="#e4e4fc"/><rect x="6" y="10.5" width="4" height="3.5" fill="#e4e4fc"/><rect x="11" y="10.5" width="3" height="3.5" fill="#e4e4fc"/><path d="M1.6 9.2 L6.6 14.4 M6.6 9.2 L1.6 14.4" stroke="#f03a10" stroke-width="2.3" stroke-linecap="round"/></svg>
<svg style="left:123px;top:363px" width="15" height="15" viewBox="0 0 15 15"><rect x="0.8" y="0.8" width="13.2" height="13.2" fill="#f2f0ff" stroke="#7cc4f8" stroke-width="1.4"/><rect x="1.5" y="2" width="12" height="1" fill="#8ccaf8"/><circle cx="6.6" cy="7.4" r="3.4" fill="#c8ecf8" stroke="#9aa8b0" stroke-width="1"/><path d="M9 9.8 L12.2 13" stroke="#f4a878" stroke-width="2"/></svg>
<svg style="left:150px;top:363px" width="15" height="15" viewBox="0 0 15 15"><path d="M0.8 4.5 H5 L6 6 H9 V13.5 H2.2 Z" fill="#f8e070" stroke="#c89010" stroke-width="0.9"/><path d="M3.6 2.8 L9.5 1.8 V12.5 L4.5 13.8 Z" fill="#fff8c8" stroke="#c89010" stroke-width="0.9"/><path d="M7.5 1 L13.5 0.8 V12.5 L8.5 13.6 Z" fill="#fffadc" stroke="#c89010" stroke-width="0.9"/><rect x="7.8" y="6.8" width="3.4" height="3.2" fill="#1a5ef0" stroke="#0838a8" stroke-width="0.5"/><rect x="6" y="10" width="3.4" height="3.4" fill="#1a5ef0" stroke="#0838a8" stroke-width="0.5"/><rect x="9.8" y="10" width="3.4" height="3.4" fill="#1a5ef0" stroke="#0838a8" stroke-width="0.5"/></svg>
<svg style="left:177px;top:363px" width="15" height="15" viewBox="0 0 15 15"><path d="M0.8 0.8 H9 L11.5 3.3 V14 H0.8 Z" fill="#fdfdff" stroke="#5a70b8" stroke-width="1"/><path d="M9 0.8 V3.3 H11.5" fill="#dfe6f8" stroke="#5a70b8" stroke-width="0.7"/><rect x="2.5" y="5.5" width="7" height="0.8" fill="#9a9ad8"/><path d="M3 10 L6 8 H12.5 L14 10 V13.5 L12.5 14.5 H4 L3 13.5 Z" fill="#ee5a30" stroke="#8a2a10" stroke-width="0.6"/><path d="M4 9 L6.5 7.8 H11.5 L13 9 Z" fill="#6a6a6a"/><rect x="11" y="3.5" width="2" height="4" fill="#e04020"/></svg>
<svg style="left:204px;top:363px" width="15" height="15" viewBox="0 0 15 15"><path d="M1 9 L3 7.5 H12 L14 9 V13.5 L12 14.5 H3 L1 13.5 Z" fill="#f0602a" stroke="#a03010" stroke-width="0.6"/><rect x="10.5" y="0.8" width="2.6" height="8" fill="#e84a20" stroke="#a03010" stroke-width="0.5"/><circle cx="6.2" cy="6.4" r="4.8" fill="#a0c4d8" stroke="#6a8898" stroke-width="0.7"/><ellipse cx="5" cy="4.8" rx="2" ry="1.3" fill="#e0f2fa"/><path d="M9.5 12.8 L13.8 8.5" stroke="#f8c040" stroke-width="2"/><path d="M8.8 13.8 L9.8 12.6" stroke="#303030" stroke-width="1.4"/></svg>
<svg style="left:233px;top:362px" width="14" height="17" viewBox="0 0 14 17"><path d="M1 1.5 H9.8 L12.5 4.2 V15.5 H1 Z" fill="#fff" stroke="#7a7a7a" stroke-width="0.9"/><path d="M1 15.5 H12.5 V4.2" fill="none" stroke="#505050" stroke-width="1.2"/><rect x="1.5" y="5.2" width="10" height="0.9" fill="#b8cce0"/><rect x="1.5" y="7.2" width="10" height="0.9" fill="#b8cce0"/><rect x="1.5" y="9.2" width="10" height="0.9" fill="#b8cce0"/><rect x="1.5" y="11.2" width="10" height="0.9" fill="#b8cce0"/><rect x="1.5" y="13.2" width="10" height="0.9" fill="#b8cce0"/><path d="M2 1.5 Q2.8 0.5 3.6 1.5 M4.8 1.5 Q5.6 0.5 6.4 1.5 M7.6 1.5 Q8.4 0.5 9.2 1.5" stroke="#8a8a8a" stroke-width="0.8" fill="none"/></svg>
<svg style="left:258px;top:363px" width="15" height="15" viewBox="0 0 15 15"><rect x="3.5" y="0.2" width="10.5" height="10.5" fill="#50505c"/><rect x="4.5" y="1.2" width="2.4" height="2.4" fill="#ffffff"/><rect x="7.7" y="1.2" width="2.4" height="2.4" fill="#dcdcf8"/><rect x="10.9" y="1.2" width="2.4" height="2.4" fill="#dcdcf8"/><rect x="4.5" y="4.4" width="2.4" height="2.4" fill="#dcdcf8"/><rect x="7.7" y="4.4" width="2.4" height="2.4" fill="#dcdcf8"/><rect x="10.9" y="4.4" width="2.4" height="2.4" fill="#dcdcf8"/><rect x="4.5" y="7.6000000000000005" width="2.4" height="2.4" fill="#dcdcf8"/><rect x="7.7" y="7.6000000000000005" width="2.4" height="2.4" fill="#dcdcf8"/><rect x="10.9" y="7.6000000000000005" width="2.4" height="2.4" fill="#dcdcf8"/><rect x="0.2" y="3.2" width="10.5" height="10.5" fill="#50505c"/><rect x="1.2" y="4.2" width="2.4" height="2.4" fill="#ffffff"/><rect x="4.4" y="4.2" width="2.4" height="2.4" fill="#dcdcf8"/><rect x="7.6000000000000005" y="4.2" width="2.4" height="2.4" fill="#dcdcf8"/><rect x="1.2" y="7.4" width="2.4" height="2.4" fill="#dcdcf8"/><rect x="4.4" y="7.4" width="2.4" height="2.4" fill="#dcdcf8"/><rect x="7.6000000000000005" y="7.4" width="2.4" height="2.4" fill="#dcdcf8"/><rect x="1.2" y="10.600000000000001" width="2.4" height="2.4" fill="#dcdcf8"/><rect x="4.4" y="10.600000000000001" width="2.4" height="2.4" fill="#dcdcf8"/><rect x="7.6000000000000005" y="10.600000000000001" width="2.4" height="2.4" fill="#dcdcf8"/></svg>
<svg style="left:314px;top:365px" width="13" height="13" viewBox="0 0 13 13"><defs><linearGradient id="g3" x1="0" y1="0" x2="0" y2="1"><stop offset="0" stop-color="#3a84ff"/><stop offset="1" stop-color="#0a4cd8"/></linearGradient></defs><path d="M4.3 0.5 H8.2 V4.3 H12 V8.2 H8.2 V12 H4.3 V8.2 H0.5 V4.3 H4.3 Z" fill="url(#g3)" stroke="#0840b0" stroke-width="0.6"/></svg>
<div class="t" style="left:331px;top:366px;">OP</div>
<svg style="left:399px;top:365px" width="13" height="13" viewBox="0 0 13 13"><defs><linearGradient id="g4" x1="0" y1="0" x2="0" y2="1"><stop offset="0" stop-color="#3a84ff"/><stop offset="1" stop-color="#0a4cd8"/></linearGradient></defs><path d="M4.3 0.5 H8.2 V4.3 H12 V8.2 H8.2 V12 H4.3 V8.2 H0.5 V4.3 H4.3 Z" fill="url(#g4)" stroke="#0840b0" stroke-width="0.6"/></svg>
<div class="t" style="left:416px;top:366px;">Projeção</div>
<svg style="left:483px;top:362px" width="15" height="15" viewBox="0 0 15 15"><circle cx="7.9" cy="8" r="4.8" fill="none" stroke="#404040" stroke-width="4.4" opacity="0.3"/><circle cx="7.2" cy="7.2" r="4.7" fill="none" stroke="#20a820" stroke-width="4.4"/><path d="M7.2 2.5 V5 M2.6 9.6 L4.8 8.4 M11.8 9.6 L9.6 8.4" stroke="#d8e8d0" stroke-width="0.9"/><path d="M3.6 4.2 A4.7 4.7 0 0 1 6.4 2.6" stroke="#a8f890" stroke-width="1.6" fill="none"/><path d="M11.6 5 A4.7 4.7 0 0 1 11.4 9.5" stroke="#a8f890" stroke-width="1.6" fill="none"/><path d="M5 11.5 A4.7 4.7 0 0 0 8.8 11.7" stroke="#80e070" stroke-width="1.4" fill="none"/></svg>
<div class="t" style="left:503px;top:366px;letter-spacing:0.2px">Atu.Dt.Talões</div>
<svg style="left:596px;top:362px" width="16" height="15" viewBox="0 0 16 15"><path d="M1 8 L4 6 H12.5 L15 9.5 V12 L11 14.5 H4.5 L1 12 Z" fill="#a8a8a8" stroke="#6a6a6a" stroke-width="0.6"/><path d="M1.2 8 L4 6.5 H8.5 V12.5 H1.2 Z" fill="#f2f2f2"/><path d="M2.8 1 H8.2 L10.5 3.8 L8 8 L4 7 Z" fill="#e4f8ff" stroke="#9a9a9a" stroke-width="0.5"/><path d="M5 3.8 L10 3.2 L12.5 7.5 L8 10 Z" fill="#3a9af0"/><path d="M5 12.6 H12" stroke="#3a3a3a" stroke-width="1.3"/><circle cx="12.8" cy="6.5" r="0.7" fill="#f0a030"/></svg>
<div class="t" style="left:616px;top:366px;">Imprimir</div>
<svg style="left:686px;top:363px" width="15" height="15" viewBox="0 0 15 15"><defs><radialGradient id="g5" cx="0.4" cy="0.35" r="0.7"><stop offset="0" stop-color="#f4fcff"/><stop offset="1" stop-color="#b0dcf8"/></radialGradient></defs><circle cx="7.8" cy="8" r="6.6" fill="#505050" opacity="0.8"/><circle cx="7.2" cy="7.2" r="6.4" fill="url(#g5)" stroke="#a8a0d0" stroke-width="0.8"/><path d="M3.7 4 L6.8 6.8 L9.8 4.4" stroke="#201010" stroke-width="1.3" fill="none"/></svg>
<div class="t" style="left:705px;top:366px;">Atu.Tempos</div>
<svg style="left:827px;top:364px" width="14" height="14" viewBox="0 0 14 14"><defs><linearGradient id="g6" x1="0" y1="0" x2="0" y2="1"><stop offset="0" stop-color="#fafafa"/><stop offset="1" stop-color="#e0e0e0"/></linearGradient></defs><rect x="0.9" y="1.9" width="11.2" height="11.2" fill="url(#g6)" stroke="#6a6a6a" stroke-width="1.1"/><path d="M2.8 7.4 L5.6 11 L12 2" stroke="#0a3ab8" stroke-width="2.5" fill="none" stroke-linecap="round" stroke-linejoin="round"/></svg>
<svg style="left:854px;top:364px" width="14" height="14" viewBox="0 0 14 14"><defs><linearGradient id="g7" x1="0" y1="0" x2="0" y2="1"><stop offset="0" stop-color="#fafafa"/><stop offset="1" stop-color="#e0e0e0"/></linearGradient></defs><rect x="0.9" y="1.9" width="11.2" height="11.2" fill="url(#g7)" stroke="#6a6a6a" stroke-width="1.1"/></svg>
<svg style="left:880px;top:364px" width="15" height="15" viewBox="0 0 15 15"><path d="M14.50 7.50 L14.44 8.41 L14.26 9.31 L12.49 9.57 L12.18 10.20 L11.78 10.79 L12.45 12.45 L11.76 13.05 L11.00 13.56 L9.57 12.49 L8.90 12.72 L8.20 12.85 L7.50 14.50 L6.59 14.44 L5.69 14.26 L5.43 12.49 L4.80 12.18 L4.21 11.78 L2.55 12.45 L1.95 11.76 L1.44 11.00 L2.51 9.57 L2.28 8.90 L2.15 8.20 L0.50 7.50 L0.56 6.59 L0.74 5.69 L2.51 5.43 L2.82 4.80 L3.22 4.21 L2.55 2.55 L3.24 1.95 L4.00 1.44 L5.43 2.51 L6.10 2.28 L6.80 2.15 L7.50 0.50 L8.41 0.56 L9.31 0.74 L9.57 2.51 L10.20 2.82 L10.79 3.22 L12.45 2.55 L13.05 3.24 L13.56 4.00 L12.49 5.43 L12.72 6.10 L12.85 6.80 Z" fill="#c4c4f0" stroke="#7878c0" stroke-width="0.8"/><circle cx="7.5" cy="7.5" r="3.4" fill="none" stroke="#a0a0d8" stroke-width="1"/><circle cx="7.5" cy="7.5" r="1.4" fill="#8080c0"/></svg>
<svg style="left:907px;top:364px" width="15" height="14" viewBox="0 0 15 14"><path d="M1 7 L3.5 2 H11 L14 6.5 V10 L11.5 13 H3.5 L1 10.5 Z" fill="#cacaca" opacity="0.8"/><path d="M1.5 6.5 L4 2 H11 L13.5 6 L11 9.5 H4 Z" fill="#f8f8f8" stroke="#d0d0d0" stroke-width="0.5"/><path d="M5 3.5 H9.5 L8 7 Z" fill="#3a8ae8"/></svg>
<svg style="left:933px;top:365px" width="16" height="12" viewBox="0 0 16 12"><path d="M2.6 3.2 L7.2 7.6" stroke="#3a3a3a" stroke-width="4.6" stroke-linecap="round"/><path d="M6.5 2 L12 6.2" stroke="#3a3a3a" stroke-width="4.6" stroke-linecap="round"/><path d="M2.2 2.6 L5.5 5" stroke="#d8d8d8" stroke-width="1.2"/><path d="M7 1.6 L10 3.6" stroke="#e8e8e8" stroke-width="1.2"/><circle cx="7.4" cy="8" r="2.3" fill="#8cc8f8"/><circle cx="12.3" cy="6.8" r="2.3" fill="#8cc8f8"/><circle cx="7" cy="7.4" r="0.9" fill="#e8f6ff"/><circle cx="11.9" cy="6.2" r="0.9" fill="#e8f6ff"/></svg>
<svg style="left:960px;top:363px" width="16" height="17" viewBox="0 0 16 17"><path d="M5.5 2 H12.5 L15 4.5 V16 H5.5 Z" fill="#f0f4fc" stroke="#3858a8" stroke-width="1"/><path d="M12.5 2 V4.5 H15" fill="none" stroke="#3858a8" stroke-width="0.7"/><path d="M7.5 13.5 H13 M12.8 7 V13.5" stroke="#7898d0" stroke-width="0.9"/><rect x="0.5" y="1.2" width="4" height="9.5" fill="#0e7a1a"/><rect x="3" y="1.2" width="7.5" height="9.5" fill="#1a9a2a"/><rect x="4.2" y="2.8" width="5.6" height="6.4" fill="#e6f2d8"/><path d="M5 3.6 L9 8.4 M9 3.6 L5 8.4" stroke="#2a8a30" stroke-width="1.4"/></svg>
<svg style="left:987px;top:363px" width="17" height="16" viewBox="0 0 17 16"><rect x="0.8" y="0.8" width="14" height="14.2" rx="1.5" fill="#1e8ef4" stroke="#0e62c8" stroke-width="0.9"/><rect x="2" y="3.2" width="11.8" height="10.6" fill="#eef0ff"/><rect x="4" y="3.2" width="1.8" height="10.6" fill="#f05a30"/><path d="M2 6 H14 M2 8.6 H14 M2 11.2 H14 M9.5 3.2 V14" stroke="#b8b8e8" stroke-width="0.6"/><path d="M6.5 7 Q8.5 3.8 12 3.6 Q16.5 3.6 16.2 7 Q16 10 12.5 10 Q9.5 10.2 8.5 8.6 Z" fill="#e8b848" stroke="#a87818" stroke-width="0.6"/><path d="M9 6.2 Q11 5 13 5.5" stroke="#f8e0a0" stroke-width="0.8" fill="none"/></svg>
<svg style="left:610px;top:385px" width="17" height="16" viewBox="0 0 17 16"><rect x="0.8" y="0.8" width="14" height="14.2" rx="1.5" fill="#1e8ef4" stroke="#0e62c8" stroke-width="0.9"/><rect x="2" y="3.2" width="11.8" height="10.6" fill="#eef0ff"/><rect x="4" y="3.2" width="1.8" height="10.6" fill="#f05a30"/><path d="M2 6 H14 M2 8.6 H14 M2 11.2 H14 M9.5 3.2 V14" stroke="#b8b8e8" stroke-width="0.6"/><path d="M6.5 7 Q8.5 3.8 12 3.6 Q16.5 3.6 16.2 7 Q16 10 12.5 10 Q9.5 10.2 8.5 8.6 Z" fill="#e8b848" stroke="#a87818" stroke-width="0.6"/><path d="M9 6.2 Q11 5 13 5.5" stroke="#f8e0a0" stroke-width="0.8" fill="none"/></svg>
<svg style="left:610px;top:407px" width="16" height="17" viewBox="0 0 16 17"><path d="M5.5 2 H12.5 L15 4.5 V16 H5.5 Z" fill="#f0f4fc" stroke="#3858a8" stroke-width="1"/><path d="M12.5 2 V4.5 H15" fill="none" stroke="#3858a8" stroke-width="0.7"/><path d="M7.5 13.5 H13 M12.8 7 V13.5" stroke="#7898d0" stroke-width="0.9"/><rect x="0.5" y="1.2" width="4" height="9.5" fill="#0e7a1a"/><rect x="3" y="1.2" width="7.5" height="9.5" fill="#1a9a2a"/><rect x="4.2" y="2.8" width="5.6" height="6.4" fill="#e6f2d8"/><path d="M5 3.6 L9 8.4 M9 3.6 L5 8.4" stroke="#2a8a30" stroke-width="1.4"/></svg>
<svg style="left:609px;top:430px" width="16" height="12" viewBox="0 0 16 12"><path d="M2.6 3.2 L7.2 7.6" stroke="#3a3a3a" stroke-width="4.6" stroke-linecap="round"/><path d="M6.5 2 L12 6.2" stroke="#3a3a3a" stroke-width="4.6" stroke-linecap="round"/><path d="M2.2 2.6 L5.5 5" stroke="#d8d8d8" stroke-width="1.2"/><path d="M7 1.6 L10 3.6" stroke="#e8e8e8" stroke-width="1.2"/><circle cx="7.4" cy="8" r="2.3" fill="#8cc8f8"/><circle cx="12.3" cy="6.8" r="2.3" fill="#8cc8f8"/><circle cx="7" cy="7.4" r="0.9" fill="#e8f6ff"/><circle cx="11.9" cy="6.2" r="0.9" fill="#e8f6ff"/></svg>
<svg style="left:645px;top:32px" width="16" height="16" viewBox="0 0 16 16"><rect x="2" y="3.5" width="12" height="12" fill="#505050" opacity="0.5"/><rect x="1" y="2.8" width="12" height="11.5" fill="#f4f4ff" stroke="#8888c8" stroke-width="0.9"/><path d="M2.5 2.8 Q3.5 1 4.5 2.8 M5.5 2.8 Q6.5 1 7.5 2.8" stroke="#303030" stroke-width="0.9" fill="none"/><rect x="1.5" y="9.5" width="11" height="4" fill="#e4e4f8"/><path d="M4 5.5 L5.2 4.6 V10" stroke="#f05010" stroke-width="1.5" fill="none"/><path d="M7 8.6 H10" stroke="#f05010" stroke-width="1.3"/><rect x="7.8" y="1" width="7.4" height="7.2" rx="0.8" fill="#4a9ae8" stroke="#3474c0" stroke-width="0.6"/><rect x="8.8" y="1.8" width="5.2" height="1" fill="#70e070"/></svg>
<svg style="left:13px;top:606px" width="15" height="15" viewBox="0 0 15 15"><rect x="1.5" y="2.2" width="11.5" height="12.5" rx="2" fill="#505050" opacity="0.35"/><rect x="0.8" y="1.5" width="11.5" height="12.5" rx="2" fill="#f8a030" stroke="#e87a10" stroke-width="0.8"/><rect x="3" y="3.5" width="7" height="8.5" fill="#e2e2f6" stroke="#606070" stroke-width="0.6"/><rect x="4.5" y="0.6" width="4" height="2.4" rx="1" fill="#e8e8e8" stroke="#909090" stroke-width="0.5"/><path d="M5 7.5 L7.2 10 L13.5 3" stroke="#22a820" stroke-width="2.6" fill="none"/></svg>
<svg style="left:824px;top:635px" width="16" height="16" viewBox="0 0 16 16"><path d="M3.5 0.8 H14 L15.2 2 V12 H3.5 Z" fill="#4a88e0" stroke="#1a48a0" stroke-width="0.7"/><path d="M0.8 3.2 H11.5 L13 4.7 V15.2 H0.8 Z" fill="#2f6ad0" stroke="#103a90" stroke-width="0.8"/><rect x="3" y="3.6" width="7" height="4.6" fill="#d8e4f8"/><rect x="3.4" y="10.2" width="6.2" height="5" fill="#c8d8f0"/><rect x="5.4" y="11" width="1.6" height="3.2" fill="#2050b0"/></svg>
<svg style="left:927px;top:635px" width="17" height="16" viewBox="0 0 17 16"><path d="M3 3 L13.5 13.5 M13.5 2.5 L3 13.5" stroke="#303030" stroke-width="4.2" stroke-linecap="round" opacity="0.35" transform="translate(1 1)"/><path d="M3 3 L13.5 13.5 M13.5 2.5 L3 13.5" stroke="#c83010" stroke-width="4.4" stroke-linecap="round"/><path d="M3 3 L13.5 13.5 M13.5 2.5 L3 13.5" stroke="#f85a22" stroke-width="3.2" stroke-linecap="round"/></svg>
<!--BODY-END-->
</body></html>
